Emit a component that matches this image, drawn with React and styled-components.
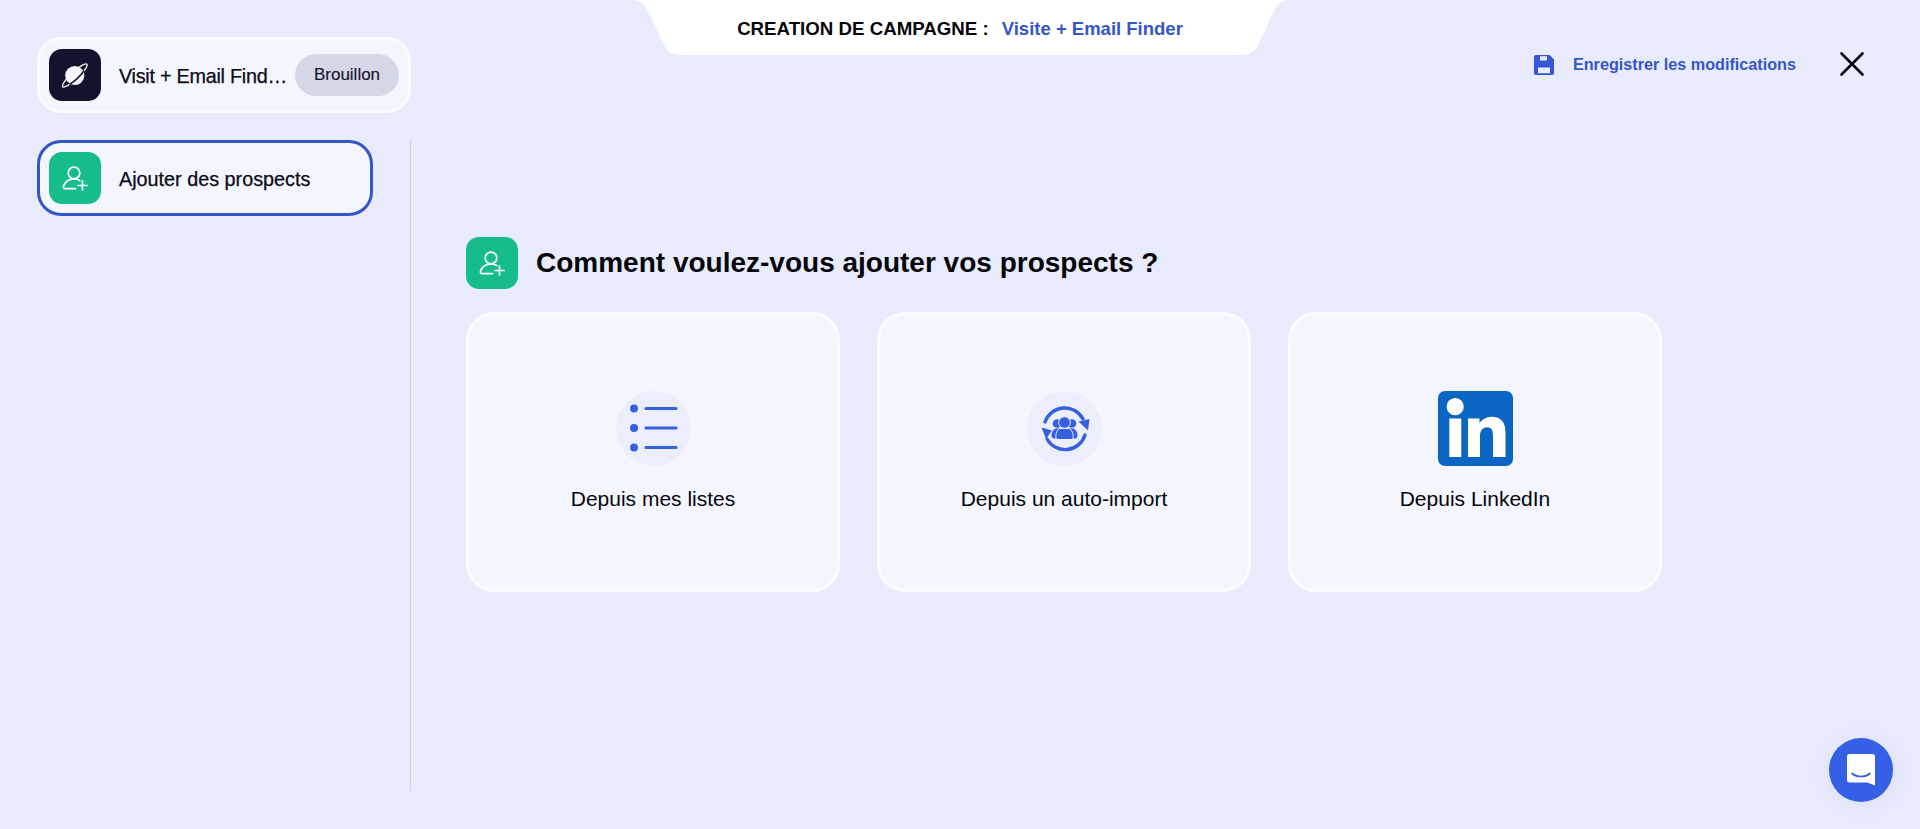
import React from "react";
import styled, { createGlobalStyle } from "styled-components";

const Global = createGlobalStyle`
  html, body { margin: 0; padding: 0; background: #e8ebfc; }
  body { font-family: "Liberation Sans", Arial, sans-serif; color: #0a0a14; }
  * { box-sizing: border-box; }
`;
const Page = styled.div`
  display: flex; width: 1920px; height: 829px; overflow: hidden; background: #e8ebfc; position: relative;
`;
const Sidebar = styled.aside`
  width: 411px; flex: none; padding: 37px 0 0 37px; display: flex; flex-direction: column;
`;
const Card = styled.div`
  display: flex; align-items: center; height: 76px; width: ${p => p.$w}px;
  padding: 0 9px; border-radius: 24px; background: #f3f6fe;
  border: 3px solid ${p => (p.$active ? "#3556c8" : "#fbfcff")};
`;
const IconTile = styled.span`
  width: 52px; height: 52px; flex: none; border-radius: 13px; display: flex; align-items: center; justify-content: center;
  background: ${p => p.$bg};
`;
const ItemLabel = styled.span`
  margin-left: 18px; padding-top: 1px; font-size: 19.8px; line-height: 24px; white-space: nowrap; -webkit-text-stroke: 0.25px currentColor;
  letter-spacing: ${p => (p.$fill ? "-0.25px" : "0")}; flex: ${p => (p.$fill ? 1 : "none")};
`;
const Badge = styled.span`
  flex: none; width: 104px; height: 42px; margin-left: 4px; border-radius: 21px; background: #d5d7e6;
  display: flex; align-items: center; justify-content: center; font-size: 17px; -webkit-text-stroke: 0.15px currentColor; color: #14142e;
`;
const Rail = styled.div`
  margin-top: 27px; width: 374px; height: 651px; border-right: 1px solid #cfd2e4;
`;
const Main = styled.main`
  flex: 1; min-width: 0; display: flex; flex-direction: column;
`;
const TopRow = styled.div`
  display: flex; align-items: flex-start; height: 76px; padding-right: 56px;
`;
const Tab = styled.div`
  margin-left: 224px; width: 652px; height: 55px; background: #fff; display: flex; align-items: center; justify-content: center;
  gap: 13px; padding: 2px 2px 0 0; font-size: 18.7px; white-space: nowrap;
  clip-path: path("M0 0 H652 C647 1 643 4 640 9 L623 45 C620 51 615 55 607 55 H45 C37 55 32 51 29 45 L12 9 C9 4 5 1 0 0 Z");
`;
const TabTitle = styled.b`color: #05050a;`;
const TabName = styled.b`color: #3556c8; font-size: 18.5px;`;
const Actions = styled.div`
  margin-left: auto; margin-top: 53px; display: flex; align-items: center;
`;
const SaveLabel = styled.span`
  margin-left: 19px; font-size: 16.2px; font-weight: 700; color: #3556c8; white-space: nowrap;
`;
const Close = styled.span`
  margin-left: 44px; display: flex; margin-top: -1px;
`;
const Content = styled.section`
  margin-top: 161px; padding-left: 55px;
`;
const Heading = styled.div`
  display: flex; align-items: center; gap: 18px;
`;
const Title = styled.h1`
  margin: 0; font-size: 28px; line-height: 34px; font-weight: 700; color: #05050a;
`;
const Options = styled.div`
  margin-top: 23px; display: grid; grid-template-columns: repeat(3, 374px); gap: 37px;
`;
const Option = styled.div`
  height: 280px; border-radius: 28px; background: #f3f6fe; border: 3px solid #fbfcff;
  display: flex; flex-direction: column; align-items: center; justify-content: center; gap: 21px; padding-bottom: 2px;
`;
const OptionIcon = styled.span`display: flex; width: 75px; height: 75px;`;
const OptionLabel = styled.span`
  font-size: 21px; line-height: 24px; color: #05050a;
`;
const Launcher = styled.div`
  position: absolute; left: 1829px; top: 738px; width: 64px; height: 64px; border-radius: 50%; background: #3560e6;
  display: flex; align-items: center; justify-content: center; box-shadow: 0 2px 24px rgba(30,40,90,.06);
`;

const PersonPlus = () => (
  <svg width="52" height="52" viewBox="0 0 52 52" fill="none" stroke="#fff" strokeWidth="1.7" strokeLinecap="round">
    <circle cx="25" cy="21" r="5.800" />
    <path d="M26.500 36.700H16.300C14.800 36.700 14 35.600 14.500 34.200C16 29.800 20 27 25 27C27.200 27 29 27.500 30.800 28.500" />
    <path d="M33.500 29V38M29 33.500H38" />
  </svg>
);
const Planet = () => (
  <svg width="52" height="52" viewBox="0 0 52 52" fill="none">
    <g transform="translate(25.800 26.500) rotate(-43)">
      <ellipse rx="16.500" ry="3.600" stroke="#f4f5f8" strokeWidth="1.400" />
      <circle r="9.600" fill="#f4f5f8" />
      <path d="M-10 2.800Q0 5 10 2.800" stroke="#13132d" strokeWidth="1.500" />
    </g>
  </svg>
);
const SaveIcon = () => (
  <svg width="20" height="20" viewBox="0 0 20 20">
    <path fill="#3556d6" fillRule="evenodd" d="M2 0H15.500L20 4.500V18a2 2 0 0 1-2 2H2a2 2 0 0 1-2-2V2a2 2 0 0 1 2-2ZM6 1.200V5.500H13V1.200ZM4 12.500V18.300H16V12.500Z" />
  </svg>
);
const CloseIcon = () => (
  <svg width="24" height="24" viewBox="0 0 24 24" stroke="#05050a" strokeWidth="2.600" strokeLinecap="round">
    <path d="M1.500 1.500L22.500 22.500M22.500 1.500L1.500 22.500" />
  </svg>
);
const ListIcon = () => (
  <svg width="75" height="75" viewBox="0 0 75 75">
    <circle cx="37.500" cy="37.500" r="37.500" fill="#eceffb" />
    <g fill="#3560e0">
      <circle cx="18" cy="17.500" r="4" /><circle cx="18" cy="37" r="4" /><circle cx="18" cy="56.500" r="4" />
    </g>
    <path d="M30 17.500H60M30 37H60M30 56.500H60" stroke="#3560e0" strokeWidth="3.200" strokeLinecap="round" />
  </svg>
);
const ImportIcon = () => (
  <svg width="75" height="75" viewBox="0 0 75 75">
    <circle cx="37.500" cy="37.500" r="37.500" fill="#eceffb" />
    <g fill="none" stroke="#3560e0" strokeWidth="3.400" strokeLinecap="round">
      <path d="M18 31A20.800 20.800 0 0 1 56 28" />
      <path d="M58 44A20.800 20.800 0 0 1 20 48" />
    </g>
    <g fill="#3560e0">
      <path d="M51.500 30.500L62.500 28L61 39.500Z" />
      <path d="M14.500 36.500L25 39.500L19 48Z" />
      <circle cx="30" cy="32.500" r="4.300" />
      <circle cx="45" cy="32.500" r="4.300" />
      <path d="M27 47.500C25 47.500 24.500 46 24.500 44.500C24.500 41 26.500 38 29 37.500H46C48.500 38 50.500 41 50.500 44.500C50.500 46 50 47.500 48 47.500Z" />
      <g stroke="#eceffb" strokeWidth="1">
        <circle cx="37.500" cy="31.500" r="5.800" />
        <path d="M31 48.500C29.500 48.500 28.800 47.300 28.800 45.500C28.800 41 31 38 33.500 37.500H41.500C44 38 46.200 41 46.200 45.500C46.200 47.300 45.500 48.500 44 48.500Z" />
      </g>
    </g>
  </svg>
);
const LinkedInLogo = () => (
  <svg width="75" height="75" viewBox="0 0 75 75">
    <rect width="75" height="75" rx="7" fill="#0a66c2" />
    <g fill="#fff">
      <circle cx="17.200" cy="15.700" r="8.600" />
      <rect x="11.300" y="27.500" width="12" height="38.500" rx="0.500" />
      <path d="M30 27.500H41.500V32.500C43.500 28.800 48 25.800 53.500 25.800C63.500 25.800 67.500 31.800 67.500 42V66H55V45.500C55 39.800 54 36.300 49.300 36.300C44.300 36.300 42 39.800 42 45.500V66H30Z" />
    </g>
  </svg>
);
const ChatIcon = () => (
  <svg width="30" height="34" viewBox="0 0 30 34">
    <path fill="#fff" d="M3.500 1H26.500A2.500 2.500 0 0 1 29 3.500V32.500L21.500 29.500H3.500A2.500 2.500 0 0 1 1 27V3.500A2.500 2.500 0 0 1 3.500 1Z" />
    <path d="M6 20.500C11 24.500 19 24.500 24 20.500" fill="none" stroke="#3560e6" strokeWidth="1.700" strokeLinecap="round" />
  </svg>
);

const OPTIONS = [
  { label: "Depuis mes listes", Icon: ListIcon },
  { label: "Depuis un auto-import", Icon: ImportIcon },
  { label: "Depuis LinkedIn", Icon: LinkedInLogo },
];

export default function App() {
  return (
    <Page>
      <Global />
      <Sidebar>
        <Card $w={374}>
          <IconTile $bg="#13132d"><Planet /></IconTile>
          <ItemLabel $fill>Visit + Email Find…</ItemLabel>
          <Badge>Brouillon</Badge>
        </Card>
        <Rail>
          <Card $w={336} $active>
            <IconTile $bg="#16bd8a"><PersonPlus /></IconTile>
            <ItemLabel>Ajouter des prospects</ItemLabel>
          </Card>
        </Rail>
      </Sidebar>
      <Main>
        <TopRow>
          <Tab>
            <TabTitle>CREATION DE CAMPAGNE :</TabTitle>
            <TabName>Visite + Email Finder</TabName>
          </Tab>
          <Actions>
            <SaveIcon />
            <SaveLabel>Enregistrer les modifications</SaveLabel>
            <Close><CloseIcon /></Close>
          </Actions>
        </TopRow>
        <Content>
          <Heading>
            <IconTile $bg="#16bd8a"><PersonPlus /></IconTile>
            <Title>Comment voulez-vous ajouter vos prospects ?</Title>
          </Heading>
          <Options>
            {OPTIONS.map(({ label, Icon }) => (
              <Option key={label}>
                <OptionIcon><Icon /></OptionIcon>
                <OptionLabel>{label}</OptionLabel>
              </Option>
            ))}
          </Options>
        </Content>
      </Main>
      <Launcher><ChatIcon /></Launcher>
    </Page>
  );
}
